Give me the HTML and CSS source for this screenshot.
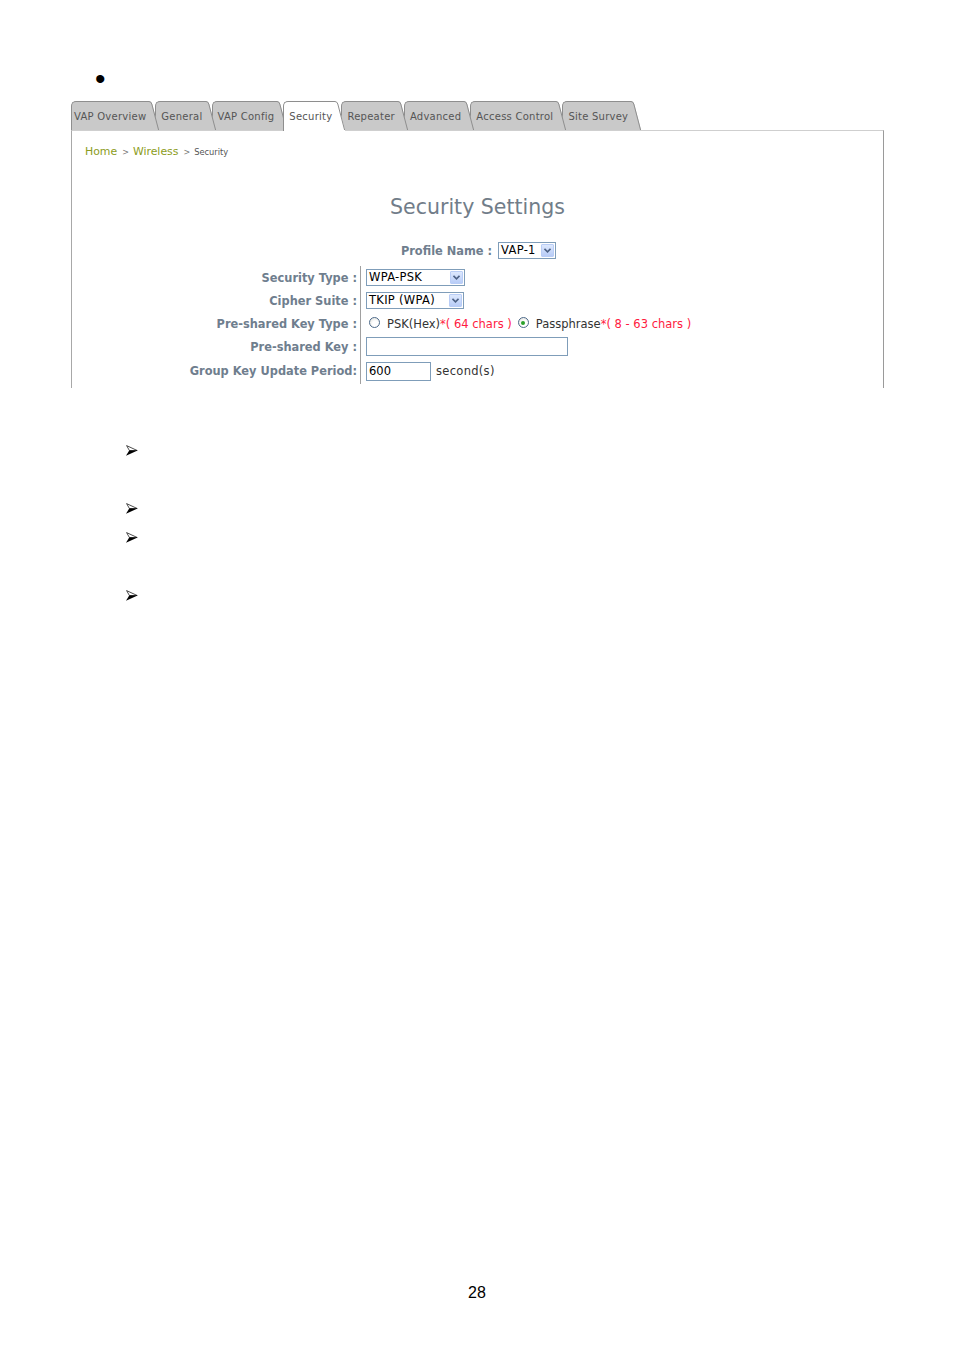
FILE: index.html
```html
<!DOCTYPE html>
<html>
<head>
<meta charset="utf-8">
<link rel="stylesheet" href="styles.css">
</head>
<body>
<div class="page">
  <div class="bullet-line"><span class="bullet">•</span></div>

  <div class="tabs">
    <div class="tab first"><span class="tab-label">VAP Overview</span><svg class="slant" viewBox="0 0 11 29" width="11" height="29"><path d="M0 0 H1 Q3.4 0 4.2 3 L11 29 H0 Z" class="slant-fill"/><path d="M0 0.5 H1 Q3 0.5 3.8 3 L10.6 29" class="slant-line"/></svg></div>
    <div class="tab"><span class="tab-label">General</span><svg class="slant" viewBox="0 0 11 29" width="11" height="29"><path d="M0 0 H1 Q3.4 0 4.2 3 L11 29 H0 Z" class="slant-fill"/><path d="M0 0.5 H1 Q3 0.5 3.8 3 L10.6 29" class="slant-line"/></svg></div>
    <div class="tab"><span class="tab-label">VAP Config</span><svg class="slant" viewBox="0 0 11 29" width="11" height="29"><path d="M0 0 H1 Q3.4 0 4.2 3 L11 29 H0 Z" class="slant-fill"/><path d="M0 0.5 H1 Q3 0.5 3.8 3 L10.6 29" class="slant-line"/></svg></div>
    <div class="tab active"><span class="tab-label">Security</span><svg class="slant" viewBox="0 0 11 30" width="11" height="30"><path d="M0 0 H1 Q3.4 0 4.2 3 L11 29 V30 H0 Z" class="slant-fill"/><path d="M0 0.5 H1 Q3 0.5 3.8 3 L10.6 29" class="slant-line"/></svg></div>
    <div class="tab"><span class="tab-label">Repeater</span><svg class="slant" viewBox="0 0 11 29" width="11" height="29"><path d="M0 0 H1 Q3.4 0 4.2 3 L11 29 H0 Z" class="slant-fill"/><path d="M0 0.5 H1 Q3 0.5 3.8 3 L10.6 29" class="slant-line"/></svg></div>
    <div class="tab"><span class="tab-label">Advanced</span><svg class="slant" viewBox="0 0 11 29" width="11" height="29"><path d="M0 0 H1 Q3.4 0 4.2 3 L11 29 H0 Z" class="slant-fill"/><path d="M0 0.5 H1 Q3 0.5 3.8 3 L10.6 29" class="slant-line"/></svg></div>
    <div class="tab"><span class="tab-label">Access Control</span><svg class="slant" viewBox="0 0 11 29" width="11" height="29"><path d="M0 0 H1 Q3.4 0 4.2 3 L11 29 H0 Z" class="slant-fill"/><path d="M0 0.5 H1 Q3 0.5 3.8 3 L10.6 29" class="slant-line"/></svg></div>
    <div class="tab"><span class="tab-label">Site Survey</span><svg class="slant" viewBox="0 0 11 29" width="11" height="29"><path d="M0 0 H1 Q3.4 0 4.2 3 L11 29 H0 Z" class="slant-fill"/><path d="M0 0.5 H1 Q3 0.5 3.8 3 L10.6 29" class="slant-line"/></svg></div>
  </div>

  <div class="panel">
    <div class="crumbs"><span class="crumb-link">Home</span><span class="crumb-sep">&gt;</span><span class="crumb-link">Wireless</span><span class="crumb-sep">&gt;</span><span class="crumb-cur">Security</span></div>

    <div class="title">Security Settings</div>

    <div class="profile">
      <span class="label">Profile Name :</span>
      <div class="select sel-profile"><span class="sel-text">VAP-1</span><span class="sel-btn"><svg viewBox="0 0 7 5" width="7" height="5"><path d="M0.5 0.8 L3.5 3.8 L6.5 0.8" class="chev"/></svg></span></div>
    </div>

    <div class="form">
      <div class="f-label">Security Type :</div>
      <div class="f-value"><div class="select sel-type"><span class="sel-text">WPA-PSK</span><span class="sel-btn"><svg viewBox="0 0 7 5" width="7" height="5"><path d="M0.5 0.8 L3.5 3.8 L6.5 0.8" class="chev"/></svg></span></div></div>

      <div class="f-label">Cipher Suite :</div>
      <div class="f-value"><div class="select sel-cipher"><span class="sel-text">TKIP (WPA)</span><span class="sel-btn"><svg viewBox="0 0 7 5" width="7" height="5"><path d="M0.5 0.8 L3.5 3.8 L6.5 0.8" class="chev"/></svg></span></div></div>

      <div class="f-label">Pre-shared Key Type :</div>
      <div class="f-value radios">
        <span class="radio"></span><span class="opt">PSK(Hex)<span class="req">*( 64 chars )</span></span>
        <span class="radio checked"></span><span class="opt">Passphrase<span class="req">*( 8 - 63 chars )</span></span>
      </div>

      <div class="f-label">Pre-shared Key :</div>
      <div class="f-value"><div class="textbox key-box"></div></div>

      <div class="f-label last">Group Key Update Period:</div>
      <div class="f-value last"><div class="textbox period-box">600</div><span class="unit">second(s)</span></div>
    </div>
  </div>

  <ul class="arrows">
    <li><svg class="arrow" viewBox="0 0 12 11" width="12" height="11"><path d="M0.6 0.6 L11.2 5.5 L3.4 5.5 Z" class="arrow-top"/><path d="M0 10.8 L11.6 5.5 L3.2 5.5 Z" class="arrow-bot"/></svg></li>
    <li class="blank"></li>
    <li><svg class="arrow" viewBox="0 0 12 11" width="12" height="11"><path d="M0.6 0.6 L11.2 5.5 L3.4 5.5 Z" class="arrow-top"/><path d="M0 10.8 L11.6 5.5 L3.2 5.5 Z" class="arrow-bot"/></svg></li>
    <li><svg class="arrow" viewBox="0 0 12 11" width="12" height="11"><path d="M0.6 0.6 L11.2 5.5 L3.4 5.5 Z" class="arrow-top"/><path d="M0 10.8 L11.6 5.5 L3.2 5.5 Z" class="arrow-bot"/></svg></li>
    <li class="blank"></li>
    <li><svg class="arrow" viewBox="0 0 12 11" width="12" height="11"><path d="M0.6 0.6 L11.2 5.5 L3.4 5.5 Z" class="arrow-top"/><path d="M0 10.8 L11.6 5.5 L3.2 5.5 Z" class="arrow-bot"/></svg></li>
  </ul>

  <div class="page-num">28</div>
</div>
</body>
</html>
```

FILE: styles.css
```css
html, body {
  margin: 0;
  padding: 0;
  background: #fff;
}
body {
  font-family: "DejaVu Sans", Verdana, sans-serif;
  color: #333;
}
.page {
  width: 954px;
  height: 1351px;
  overflow: hidden;
}

/* bullet */
.bullet-line {
  height: 101px;
  box-sizing: border-box;
  padding: 64px 0 0 95px;
  font-family: "Liberation Sans", Arial, sans-serif;
  font-size: 30px;
  line-height: 30px;
  color: #000;
}

/* tabs */
.tabs {
  display: flex;
  align-items: flex-start;
  height: 30px;
  margin: 0 0 -1px 71px;
  position: relative;
  z-index: 2;
}
.tab {
  display: flex;
  position: relative;
  margin-left: -4px;
}
.tab.first { margin-left: 0; }
.tab:nth-child(1) { z-index: 8; }
.tab:nth-child(2) { z-index: 7; }
.tab:nth-child(3) { z-index: 6; }
.tab:nth-child(4) { z-index: 10; }
.tab:nth-child(5) { z-index: 4; }
.tab:nth-child(6) { z-index: 3; }
.tab:nth-child(7) { z-index: 2; }
.tab:nth-child(8) { z-index: 1; }
.tab-label {
  display: block;
  height: 28px;
  line-height: 30px;
  padding: 0 2px 0 5px;
  background: #c9c9c9;
  border-top: 1px solid #8e8e8e;
  border-left: 1px solid #8e8e8e;
  border-top-left-radius: 5px;
  font-size: 10px;
  letter-spacing: 0.25px;
  color: #555;
  white-space: nowrap;
}
.tab.first .tab-label { padding-left: 2px; }
.slant { display: block; }
.slant-fill { fill: #c9c9c9; }
.slant-line { fill: none; stroke: #8e8e8e; stroke-width: 1; }
.tab.active .tab-label {
  background: #fff;
  height: 29px;
}
.tab.active .slant-fill { fill: #fff; }

/* panel */
.panel {
  margin-left: 71px;
  width: 811px;
  height: 257px;
  border-left: 1px solid #a8a8a8;
  border-right: 1px solid #9a9a9a;
  border-top: 1px solid #cfcfcf;
  position: relative;
  z-index: 1;
}
.crumbs {
  margin-top: 14px;
  padding-left: 13px;
  height: 14px;
  line-height: 14px;
  display: flex;
  align-items: baseline;
}
.crumb-link {
  font-size: 10.9px;
  color: #8c9c22;
}
.crumb-sep {
  font-size: 8px;
  color: #777;
  margin: 0 4px 0 5px;
}
.crumb-cur {
  font-size: 8.3px;
  color: #555;
}
.title {
  margin-top: 36px;
  height: 24px;
  line-height: 24px;
  text-align: center;
  font-size: 20.5px;
  color: #717d89;
}
.profile {
  margin-top: 22px;
  height: 19px;
  display: flex;
  justify-content: center;
  align-items: center;
  gap: 6px;
  padding-left: 2px;
}
.label, .f-label {
  font-size: 11.4px;
  font-weight: bold;
  color: #6f7e8e;
  white-space: nowrap;
}

/* select */
.select {
  display: flex;
  align-items: center;
  box-sizing: border-box;
  height: 17px;
  border: 1px solid #7f9db9;
  background: #fff;
}
.sel-text {
  flex: 1;
  font-size: 11.5px;
  letter-spacing: 0.3px;
  color: #000;
  padding-left: 2px;
  line-height: 15px;
  white-space: nowrap;
}
.sel-btn {
  width: 13px;
  height: 13px;
  margin-right: 1px;
  box-sizing: border-box;
  border: 1px solid #b9cdf6;
  background: linear-gradient(#dde8fd, #b8ccf7);
  border-radius: 1px;
  display: flex;
  align-items: center;
  justify-content: center;
}
.chev {
  fill: none;
  stroke: #4d6185;
  stroke-width: 1.6;
}
.sel-profile { width: 58px; }
.sel-type { width: 99px; }
.sel-cipher { width: 98px; }

/* form */
.form {
  margin-top: 6px;
  display: grid;
  grid-template-columns: 288px auto;
  grid-auto-rows: 23px;
}
.f-label {
  text-align: right;
  padding-right: 3px;
  display: flex;
  align-items: center;
  justify-content: flex-end;
}
.f-value {
  border-left: 1px solid #a0a0a0;
  padding-left: 5px;
  display: flex;
  align-items: center;
  font-size: 11.5px;
  color: #333;
  white-space: nowrap;
}
.f-label.last, .f-value.last { height: 26px; }
.radios { padding-left: 8px; }
.radio {
  width: 11px;
  height: 11px;
  box-sizing: border-box;
  border-radius: 50%;
  border: 1px solid #4d6a8a;
  background: radial-gradient(circle at 60% 65%, #fff 35%, #dcdcd6 100%);
  display: flex;
  align-items: center;
  justify-content: center;
  margin-top: -2px;
}
.radio.checked::after {
  content: "";
  width: 4px;
  height: 4px;
  border-radius: 50%;
  background: #2ba12b;
}
.opt {
  margin: 0 6px 0 7px;
}
.req { color: #ff1a40; }
.textbox {
  box-sizing: border-box;
  height: 19px;
  border: 1px solid #7f9db9;
  background: #fff;
  font-size: 11.5px;
  color: #000;
  line-height: 17px;
  padding-left: 2px;
}
.key-box { width: 202px; }
.period-box { width: 65px; }
.unit { margin-left: 5px; color: #333; letter-spacing: 0.3px; }

/* arrows */
.arrows {
  list-style: none;
  margin: 48px 0 0 126px;
  padding: 0;
}
.arrows li {
  height: 29px;
  display: flex;
  align-items: center;
}
.arrow { display: block; }
.arrow-top { fill: #fff; stroke: #000; stroke-width: 0.7; stroke-linejoin: miter; }
.arrow-bot { fill: #000; }

.page-num {
  margin-top: 673px;
  text-align: center;
  font-family: "Liberation Sans", Arial, sans-serif;
  font-size: 16px;
  line-height: 20px;
  color: #000;
}
```
